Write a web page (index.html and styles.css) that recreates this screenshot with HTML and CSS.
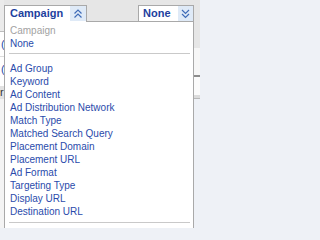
FILE: index.html
```html
<!DOCTYPE html>
<html>
<head>
<meta charset="utf-8">
<link rel="stylesheet" href="styles.css">
</head>
<body>
<div class="page">
  <div class="side">
    <div class="side-bar"></div>
    <div class="side-row side-row-line">(</div>
    <div class="side-row">(</div>
    <div class="side-gap"></div>
    <div class="side-band">r</div>
    <div class="side-rest"></div>
  </div>
  <div class="main">
    <div class="main-bar"></div>
    <div class="main-row"></div>
    <div class="main-white"></div>
    <div class="main-band"></div>
    <div class="main-rest"></div>
  </div>
</div>

<div class="dropdown">
  <div class="tabs">
    <div class="tab tab-open">
      <span class="tab-label">Campaign</span>
      <span class="tab-arrow">
        <svg width="16" height="15" viewBox="0 0 16 15"><path d="M4.5 7.5 L8 4 L11.5 7.5 M4.5 11.5 L8 8 L11.5 11.5" fill="none" stroke="#3f6cb8" stroke-width="1.2"/></svg>
      </span>
    </div>
    <div class="tab tab-closed">
      <span class="tab-label tab-label-none">None</span>
      <span class="tab-arrow tab-arrow-none">
        <svg width="15" height="15" viewBox="0 0 15 15"><path d="M4 4 L7.5 7.5 L11 4 M4 8 L7.5 11.5 L11 8" fill="none" stroke="#3f6cb8" stroke-width="1.2"/></svg>
      </span>
    </div>
  </div>
  <div class="panel">
    <div class="item item-current">Campaign</div>
    <div class="item">None</div>
    <div class="divider divider-top"></div>
    <div class="item">Ad Group</div>
    <div class="item">Keyword</div>
    <div class="item">Ad Content</div>
    <div class="item">Ad Distribution Network</div>
    <div class="item">Match Type</div>
    <div class="item">Matched Search Query</div>
    <div class="item">Placement Domain</div>
    <div class="item">Placement URL</div>
    <div class="item">Ad Format</div>
    <div class="item">Targeting Type</div>
    <div class="item">Display URL</div>
    <div class="item">Destination URL</div>
    <div class="divider divider-bottom"></div>
  </div>
</div>
</body>
</html>
```

FILE: styles.css
```css
html, body {
  margin: 0;
  padding: 0;
}
body {
  width: 200px;
  height: 228px;
  overflow: hidden;
  position: relative;
  font-family: "Liberation Sans", Arial, sans-serif;
  background: #eef1f6;
}

/* background page */
.page {
  display: flex;
  height: 228px;
}
.side {
  width: 4px;
  display: flex;
  flex-direction: column;
  overflow: hidden;
}
.side-bar {
  height: 31px;
  background: #ebebeb;
  border-bottom: 1px solid #bdbdbd;
}
.side-row {
  height: 24px;
  background: #ffffff;
  color: #2a4bab;
  font-size: 11px;
  line-height: 24px;
  padding-left: 1px;
}
.side-row-line {
  border-bottom: 1px solid #dddddd;
}
.side-gap {
  height: 5px;
  background: #ffffff;
}
.side-band {
  height: 13px;
  background: #e2e2e2;
  color: #333333;
  font-size: 11px;
  line-height: 13px;
}
.side-rest {
  flex: 1;
  background: #f4f4f4;
}
.main {
  flex: 1;
  display: flex;
  flex-direction: column;
}
.main-bar {
  height: 48px;
  background: #e6e6e6;
}
.main-row {
  height: 27px;
  background: #f6f6f6;
  border-bottom: 2px solid #8c8c8c;
}
.main-white {
  height: 18px;
  background: #fbfbfb;
}
.main-band {
  height: 3px;
  background: #dcdcdc;
  border-bottom: 1px solid #b8b8b8;
}
.main-rest {
  flex: 1;
  background: #eef1f6;
}

/* dropdown overlay */
.dropdown {
  position: absolute;
  left: 4px;
  top: 5px;
  width: 190px;
}
.tabs {
  display: flex;
  justify-content: space-between;
  align-items: flex-start;
  position: relative;
  z-index: 1;
}
.tab {
  display: flex;
  box-sizing: border-box;
  background: #ffffff;
  border: 1px solid #a9a9a9;
  margin-bottom: -1px;
}
.tab-open {
  width: 83px;
  height: 17px;
  border-bottom: none;
}
.tab-closed {
  width: 56px;
  height: 17px;
}
.tab-label {
  flex: 1;
  padding-left: 5px;
  font-size: 11px;
  font-weight: bold;
  line-height: 15px;
  color: #1d3f9e;
  white-space: nowrap;
}
.tab-label-none {
  padding-left: 4px;
}
.tab-arrow {
  width: 16px;
  height: 15px;
  background: #dfeaf7;
  display: flex;
  align-items: center;
  justify-content: center;
}
.tab-arrow svg {
  display: block;
}
.tab-arrow-none {
  width: 15px;
}
.panel {
  box-sizing: border-box;
  background: #ffffff;
  border: 1px solid #a9a9a9;
  border-bottom: none;
  height: 230px;
  padding: 2px 3px 0 4px;
}
.item {
  font-size: 10px;
  line-height: 13px;
  color: #2a4bab;
  padding-left: 1px;
  white-space: nowrap;
}
.item-current {
  color: #a2a2a2;
}
.divider {
  height: 1px;
  background: #c9c9c9;
}
.divider-top {
  margin: 3px 0 8px 0;
}
.divider-bottom {
  margin-top: 4px;
}
```
